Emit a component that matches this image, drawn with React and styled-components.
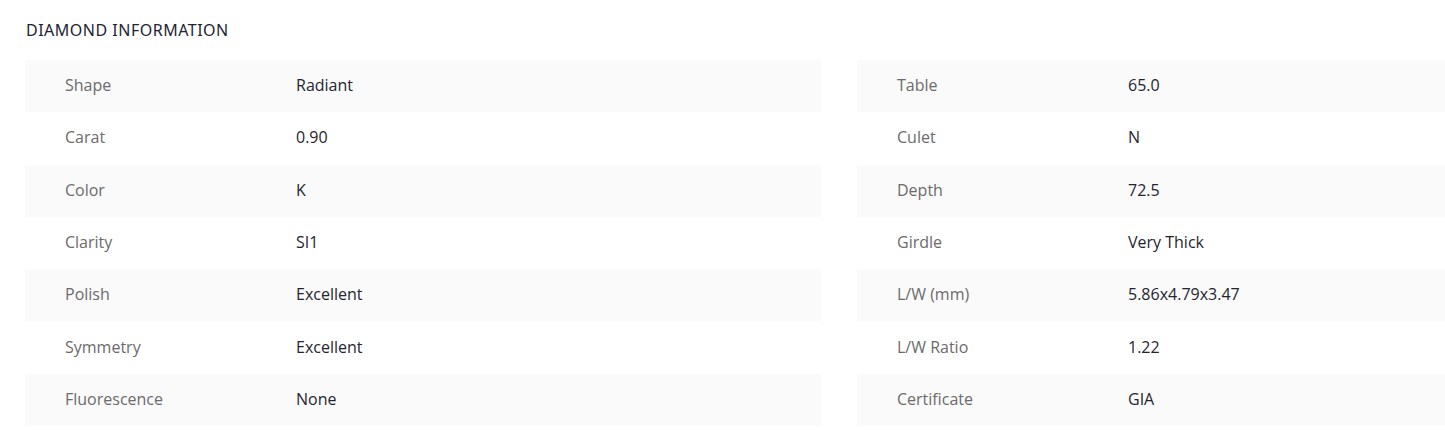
import React from "react";
import styled, { createGlobalStyle } from "styled-components";

const GlobalStyle = createGlobalStyle`
  html, body {
    margin: 0;
    padding: 0;
    background: #ffffff;
    overflow: hidden;
  }
  body {
    font-family: "Open Sans", Lato, sans-serif;
  }
`;

const Section = styled.section`
  width: 1445px;
  padding: 20px 0 0 25px;
  box-sizing: border-box;
`;

const Title = styled.h2`
  margin: 0 0 0 1px;
  height: 20px;
  line-height: 20px;
  font-family: "Noto Sans", sans-serif;
  font-size: 16px;
  font-weight: 400;
  letter-spacing: 0.5px;
  color: #1d2433;
  text-transform: uppercase;
`;

const Columns = styled.div`
  display: grid;
  grid-template-columns: 796px 1fr;
  column-gap: 36px;
  margin-top: 20px;
`;

const Table = styled.div`
  display: flex;
  flex-direction: column;
`;

const Row = styled.div`
  display: grid;
  grid-template-columns: 271px 1fr;
  align-items: center;
  height: 52.3px;
  padding: 0 0 2px 40px;
  box-sizing: border-box;
  background: ${(p) => (p.$shaded ? "#fafafa" : "#ffffff")};
`;

const Label = styled.span`
  font-size: 16px;
  color: #6b6b6b;
`;

const Value = styled.span`
  font-size: 16px;
  color: #1f2530;
  margin-left: -40px;
`;

const left = [
  ["Shape", "Radiant"],
  ["Carat", "0.90"],
  ["Color", "K"],
  ["Clarity", "SI1"],
  ["Polish", "Excellent"],
  ["Symmetry", "Excellent"],
  ["Fluorescence", "None"],
];

const right = [
  ["Table", "65.0"],
  ["Culet", "N"],
  ["Depth", "72.5"],
  ["Girdle", "Very Thick"],
  ["L/W (mm)", "5.86x4.79x3.47"],
  ["L/W Ratio", "1.22"],
  ["Certificate", "GIA"],
];

function InfoTable({ rows }) {
  return (
    <Table>
      {rows.map(([label, value], i) => (
        <Row key={label} $shaded={i % 2 === 0}>
          <Label>{label}</Label>
          <Value>{value}</Value>
        </Row>
      ))}
    </Table>
  );
}

export default function App() {
  return (
    <>
      <GlobalStyle />
      <Section>
        <Title>Diamond Information</Title>
        <Columns>
          <InfoTable rows={left} />
          <InfoTable rows={right} />
        </Columns>
      </Section>
    </>
  );
}
